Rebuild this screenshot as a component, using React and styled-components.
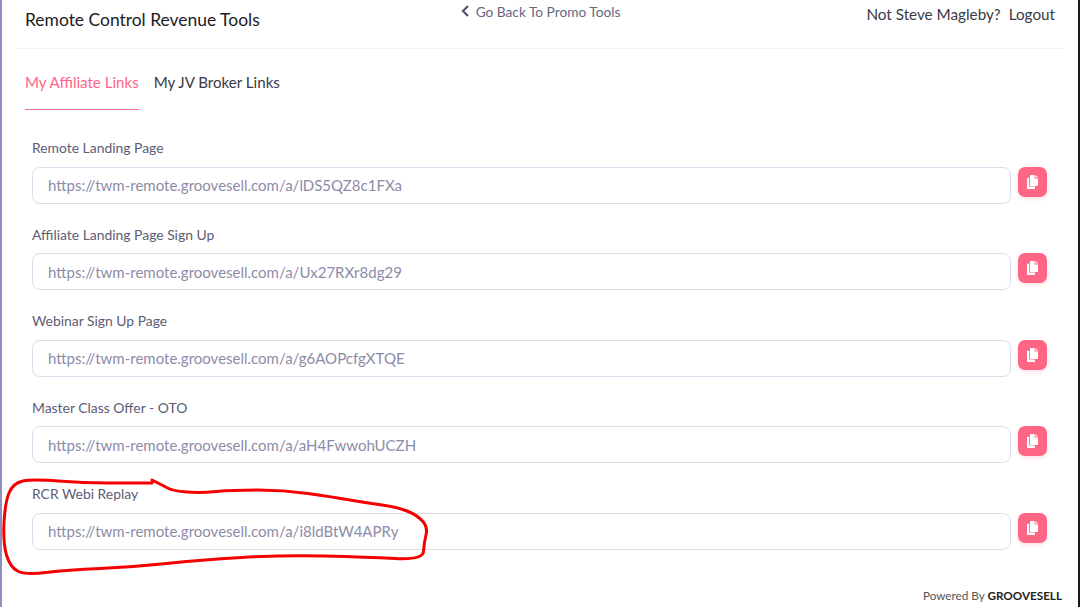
import React from "react";
import styled, { createGlobalStyle } from "styled-components";

const Global = createGlobalStyle`
  html, body { margin: 0; padding: 0; background: #fff; }
  body { font-family: "Lato", "Open Sans", sans-serif; overflow: hidden; }
`;

const Page = styled.div`
  position: relative;
  box-sizing: border-box;
  width: 1080px;
  height: 607px;
  overflow: hidden;
  background: #fff;
  border-left: 2px solid #8f8fbf;
  border-right: 2px solid #1a1a1a;
  padding: 0 16px 0 15px;
  display: flex;
  flex-direction: column;
`;

const Header = styled.header`
  height: 48px;
  flex: none;
  border-bottom: 1px solid #efeff7;
  padding: 0 7px 0 8px;
  display: grid;
  grid-template-columns: 1fr auto 1fr;
`;

const Title = styled.h1`
  margin: 10px 0 0;
  font-size: 17.45px;
  line-height: 20px;
  font-weight: 400;
  color: #1c1c24;
`;

const Back = styled.a`
  display: flex;
  align-items: center;
  gap: 6px;
  height: 14px;
  margin-top: 4px;
  margin-left: 1px;
  font-size: 13.7px;
  color: #66667f;
`;

const Account = styled.div`
  justify-self: end;
  margin-top: 5px;
  font-size: 15.25px;
  line-height: 18px;
  color: #3a3a46;
  display: flex;
  gap: 8px;
`;

const Tabs = styled.nav`
  display: flex;
  gap: 15px;
  padding: 0 8px;
  margin-top: 16px;
`;

const Tab = styled.a`
  height: 45px;
  box-sizing: border-box;
  border-bottom: 1px solid ${(p) => (p.$active ? "#f0688a" : "transparent")};
  padding-top: 8px;
  font-size: 15.1px;
  line-height: 18px;
  color: ${(p) => (p.$active ? "#ff6585" : "#3a3a46")};
`;

const Links = styled.div`
  display: flex;
  flex-direction: column;
  padding: 28.9px 0 0 15px;
`;

const Row = styled.div`
  height: 86.5px;
  flex: none;
`;

const Label = styled.label`
  display: block;
  font-size: 13.9px;
  line-height: 18px;
  color: #5c5c76;
  margin: 0.2px 0 9.8px;
`;

const Field = styled.div`
  display: flex;
  gap: 7px;
  align-items: flex-start;
`;

const Input = styled.div`
  width: 979px;
  height: 37px;
  box-sizing: border-box;
  border: 1px solid #dcdcec;
  border-radius: 8px;
  padding: 0 15px;
  display: flex;
  align-items: center;
  font-size: 15px;
  color: #8c8ca8;
`;

const CopyButton = styled.button`
  width: 29px;
  height: 30px;
  padding: 0;
  border: 0;
  border-radius: 7px;
  background: #ff6585;
  box-shadow: 0 2px 4px rgba(255, 101, 133, 0.2);
  display: flex;
  align-items: center;
  justify-content: center;
`;

const Footer = styled.footer`
  position: absolute;
  right: 16px;
  bottom: 5px;
  font-size: 11.7px;
  line-height: 14px;
  color: #555;
`;

const Brand = styled.strong`
  color: #222;
  font-weight: 700;
`;

const Scribble = styled.svg`
  position: absolute;
  left: -2px;
  top: 0;
  pointer-events: none;
`;

const CopyIcon = () => (
  <svg width="12" height="14" viewBox="0 0 12 14" fill="#fff">
    <path d="M0 3.2 C0 2.9 .3 2.7 .6 2.7 H2.2 V11.5 H8 V13.2 C8 13.6 7.7 14 7.3 14 H.6 C.3 14 0 13.6 0 13.2 Z" />
    <path d="M3 .7 C3 .3 3.3 0 3.7 0 H7.6 V3.4 H11 V10.3 C11 10.7 10.7 11 10.3 11 H3.7 C3.3 11 3 10.7 3 10.3 Z" />
    <path d="M8.4 0 L11 2.6 H8.4 Z" />
  </svg>
);

const links = [
  ["Remote Landing Page", "https://twm-remote.groovesell.com/a/lDS5QZ8c1FXa"],
  ["Affiliate Landing Page Sign Up", "https://twm-remote.groovesell.com/a/Ux27RXr8dg29"],
  ["Webinar Sign Up Page", "https://twm-remote.groovesell.com/a/g6AOPcfgXTQE"],
  ["Master Class Offer - OTO", "https://twm-remote.groovesell.com/a/aH4FwwohUCZH"],
  ["RCR Webi Replay", "https://twm-remote.groovesell.com/a/i8ldBtW4APRy"],
];

const scribblePoints = [
  [152, 483], [133, 483], [83, 483], [33, 479], [13, 483], [5, 503], [3, 543],
  [10, 567], [25, 575], [67, 570], [133, 567], [200, 560], [283, 555], [367, 557], [423, 560],
  [424, 543], [428, 527], [417, 515], [397, 507], [367, 503], [333, 497], [283, 490], [233, 490],
  [200, 493], [173, 491], [162, 485], [152, 480],
];

const smoothPath = (pts) => {
  let d = `M${pts[0][0]} ${pts[0][1]}`;
  for (let i = 1; i < pts.length - 1; i++) {
    const mx = (pts[i][0] + pts[i + 1][0]) / 2;
    const my = (pts[i][1] + pts[i + 1][1]) / 2;
    d += ` Q${pts[i][0]} ${pts[i][1]} ${mx} ${my}`;
  }
  const last = pts[pts.length - 1];
  return `${d} L${last[0]} ${last[1]}`;
};

export default function App() {
  return (
    <Page>
      <Global />
      <Header>
        <Title>Remote Control Revenue Tools</Title>
        <Back>
          <svg width="9" height="12" viewBox="0 0 9 12" fill="none" stroke="#55556f" strokeWidth="2.2">
            <path d="M7 1 L2 6 L7 11" />
          </svg>
          Go Back To Promo Tools
        </Back>
        <Account>
          <span>Not Steve Magleby?</span>
          <span>Logout</span>
        </Account>
      </Header>
      <Tabs>
        <Tab $active>My Affiliate Links</Tab>
        <Tab>My JV Broker Links</Tab>
      </Tabs>
      <Links>
        {links.map(([label, url]) => (
          <Row key={label}>
            <Label>{label}</Label>
            <Field>
              <Input>{url}</Input>
              <CopyButton aria-label="Copy">
                <CopyIcon />
              </CopyButton>
            </Field>
          </Row>
        ))}
      </Links>
      <Footer>
        Powered By <Brand>GROOVESELL</Brand>
      </Footer>
      <Scribble width="1080" height="607" viewBox="0 0 1080 607" fill="none">
        <path
          d={smoothPath(scribblePoints)}
          stroke="#f40000"
          strokeWidth="3"
          strokeLinecap="round"
          strokeLinejoin="round"
        />
      </Scribble>
    </Page>
  );
}
